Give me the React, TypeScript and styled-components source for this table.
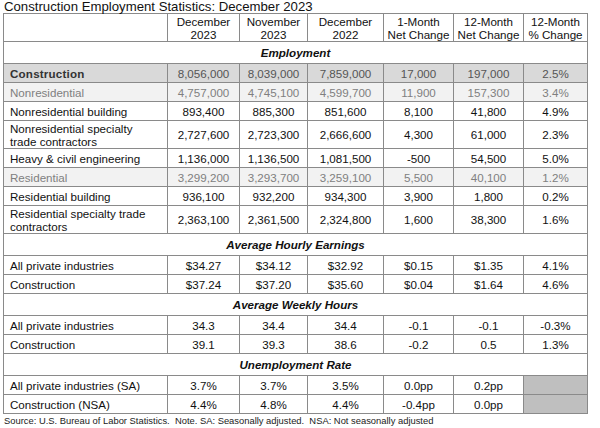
import React from 'react';
import styled, { createGlobalStyle } from 'styled-components';

const GlobalStyle = createGlobalStyle`
  html, body {
    margin: 0;
    padding: 0;
    background: #ffffff;
  }
  body {
    font-family: "Liberation Sans", Arial, sans-serif;
    color: #1a1a1a;
  }
`;

const Page = styled.div`
  width: 600px;
  height: 428px;
  padding: 0 0 0 3px;
  box-sizing: border-box;
  overflow: hidden;
`;

const Title = styled.div`
  font-size: 13.2px;
  line-height: 13px;
  height: 13px;
  padding-left: 1px;
  color: #111;
`;

const Table = styled.table`
  border-collapse: collapse;
  table-layout: fixed;
  width: 584px;
  font-size: 11.6px;
  line-height: 13px;

  td, th {
    border: 1px solid #8a8a8a;
    padding: 0 2px;
  }
`;

const HeadRow = styled.tr`
  height: 28px;
`;

const HeadCell = styled.th`
  font-weight: normal;
  text-align: center;
  color: #111;
`;

type Tone = 'total' | 'sub' | 'plain';

const Row = styled.tr<{ $tone: Tone; $tall?: boolean }>`
  height: ${p => (p.$tall ? '28px' : '19px')};
  background: ${p =>
    p.$tone === 'total' ? '#d9d9d9' : p.$tone === 'sub' ? '#f2f2f2' : '#ffffff'};
  color: ${p =>
    p.$tone === 'total' ? '#555555' : p.$tone === 'sub' ? '#808080' : '#111111'};
`;

const LabelCell = styled.td<{ $bold?: boolean }>`
  && {
    padding: 0 6px;
  }
  font-weight: ${p => (p.$bold ? 'bold' : 'normal')};
  color: ${p => (p.$bold ? '#333333' : 'inherit')};
  letter-spacing: ${p => (p.$bold ? '0.2px' : '0')};
`;

const ValueCell = styled.td<{ $blank?: boolean }>`
  text-align: center;
  background: ${p => (p.$blank ? '#bfbfbf' : 'transparent')};
`;

const SectionRow = styled.tr`
  height: 22px;
`;

const SectionCell = styled.td`
  text-align: center;
  font-weight: bold;
  font-style: italic;
  color: #111;
`;

const Footer = styled.div`
  font-size: 9.4px;
  line-height: 12px;
  padding: 1px 0 0 1px;
  color: #222;
  white-space: pre;
`;

type DataRow = {
  label: React.ReactNode;
  values: (string | null)[];
  tone?: Tone;
  bold?: boolean;
  tall?: boolean;
};

type Section = { title: string; rows: DataRow[] };

const sections: Section[] = [
  {
    title: 'Employment',
    rows: [
      { label: 'Construction', values: ['8,056,000', '8,039,000', '7,859,000', '17,000', '197,000', '2.5%'], tone: 'total', bold: true },
      { label: 'Nonresidential', values: ['4,757,000', '4,745,100', '4,599,700', '11,900', '157,300', '3.4%'], tone: 'sub' },
      { label: 'Nonresidential building', values: ['893,400', '885,300', '851,600', '8,100', '41,800', '4.9%'] },
      { label: <>Nonresidential specialty<br />trade contractors</>, values: ['2,727,600', '2,723,300', '2,666,600', '4,300', '61,000', '2.3%'], tall: true },
      { label: 'Heavy & civil engineering', values: ['1,136,000', '1,136,500', '1,081,500', '-500', '54,500', '5.0%'] },
      { label: 'Residential', values: ['3,299,200', '3,293,700', '3,259,100', '5,500', '40,100', '1.2%'], tone: 'sub' },
      { label: 'Residential building', values: ['936,100', '932,200', '934,300', '3,900', '1,800', '0.2%'] },
      { label: <>Residential specialty trade<br />contractors</>, values: ['2,363,100', '2,361,500', '2,324,800', '1,600', '38,300', '1.6%'], tall: true },
    ],
  },
  {
    title: 'Average Hourly Earnings',
    rows: [
      { label: 'All private industries', values: ['$34.27', '$34.12', '$32.92', '$0.15', '$1.35', '4.1%'] },
      { label: 'Construction', values: ['$37.24', '$37.20', '$35.60', '$0.04', '$1.64', '4.6%'] },
    ],
  },
  {
    title: 'Average Weekly Hours',
    rows: [
      { label: 'All private industries', values: ['34.3', '34.4', '34.4', '-0.1', '-0.1', '-0.3%'] },
      { label: 'Construction', values: ['39.1', '39.3', '38.6', '-0.2', '0.5', '1.3%'] },
    ],
  },
  {
    title: 'Unemployment Rate',
    rows: [
      { label: 'All private industries (SA)', values: ['3.7%', '3.7%', '3.5%', '0.0pp', '0.2pp', null] },
      { label: 'Construction (NSA)', values: ['4.4%', '4.8%', '4.4%', '-0.4pp', '0.0pp', null] },
    ],
  },
];

const headers: [string, string][] = [
  ['December', '2023'],
  ['November', '2023'],
  ['December', '2022'],
  ['1-Month', 'Net Change'],
  ['12-Month', 'Net Change'],
  ['12-Month', '% Change'],
];

const colWidths = [164, 72, 68, 76, 70, 70, 64];

export default function App() {
  return (
    <Page>
      <GlobalStyle />
      <Title>Construction Employment Statistics: December 2023</Title>
      <Table>
        <colgroup>
          {colWidths.map((w, i) => (
            <col key={i} style={{ width: w }} />
          ))}
        </colgroup>
        <thead>
          <HeadRow>
            <HeadCell />
            {headers.map(([a, b], i) => (
              <HeadCell key={i}>
                {a}
                <br />
                {b}
              </HeadCell>
            ))}
          </HeadRow>
        </thead>
        <tbody>
          {sections.map(section => (
            <React.Fragment key={section.title}>
              <SectionRow>
                <SectionCell colSpan={7}>{section.title}</SectionCell>
              </SectionRow>
              {section.rows.map((row, ri) => (
                <Row key={ri} $tone={row.tone ?? 'plain'} $tall={row.tall}>
                  <LabelCell $bold={row.bold}>{row.label}</LabelCell>
                  {row.values.map((v, vi) =>
                    v === null ? (
                      <ValueCell key={vi} $blank />
                    ) : (
                      <ValueCell key={vi}>{v}</ValueCell>
                    )
                  )}
                </Row>
              ))}
            </React.Fragment>
          ))}
        </tbody>
      </Table>
      <Footer>
        {'Source: U.S. Bureau of Labor Statistics.  Note. SA: Seasonally adjusted.  NSA: Not seasonally adjusted'}
      </Footer>
    </Page>
  );
}
